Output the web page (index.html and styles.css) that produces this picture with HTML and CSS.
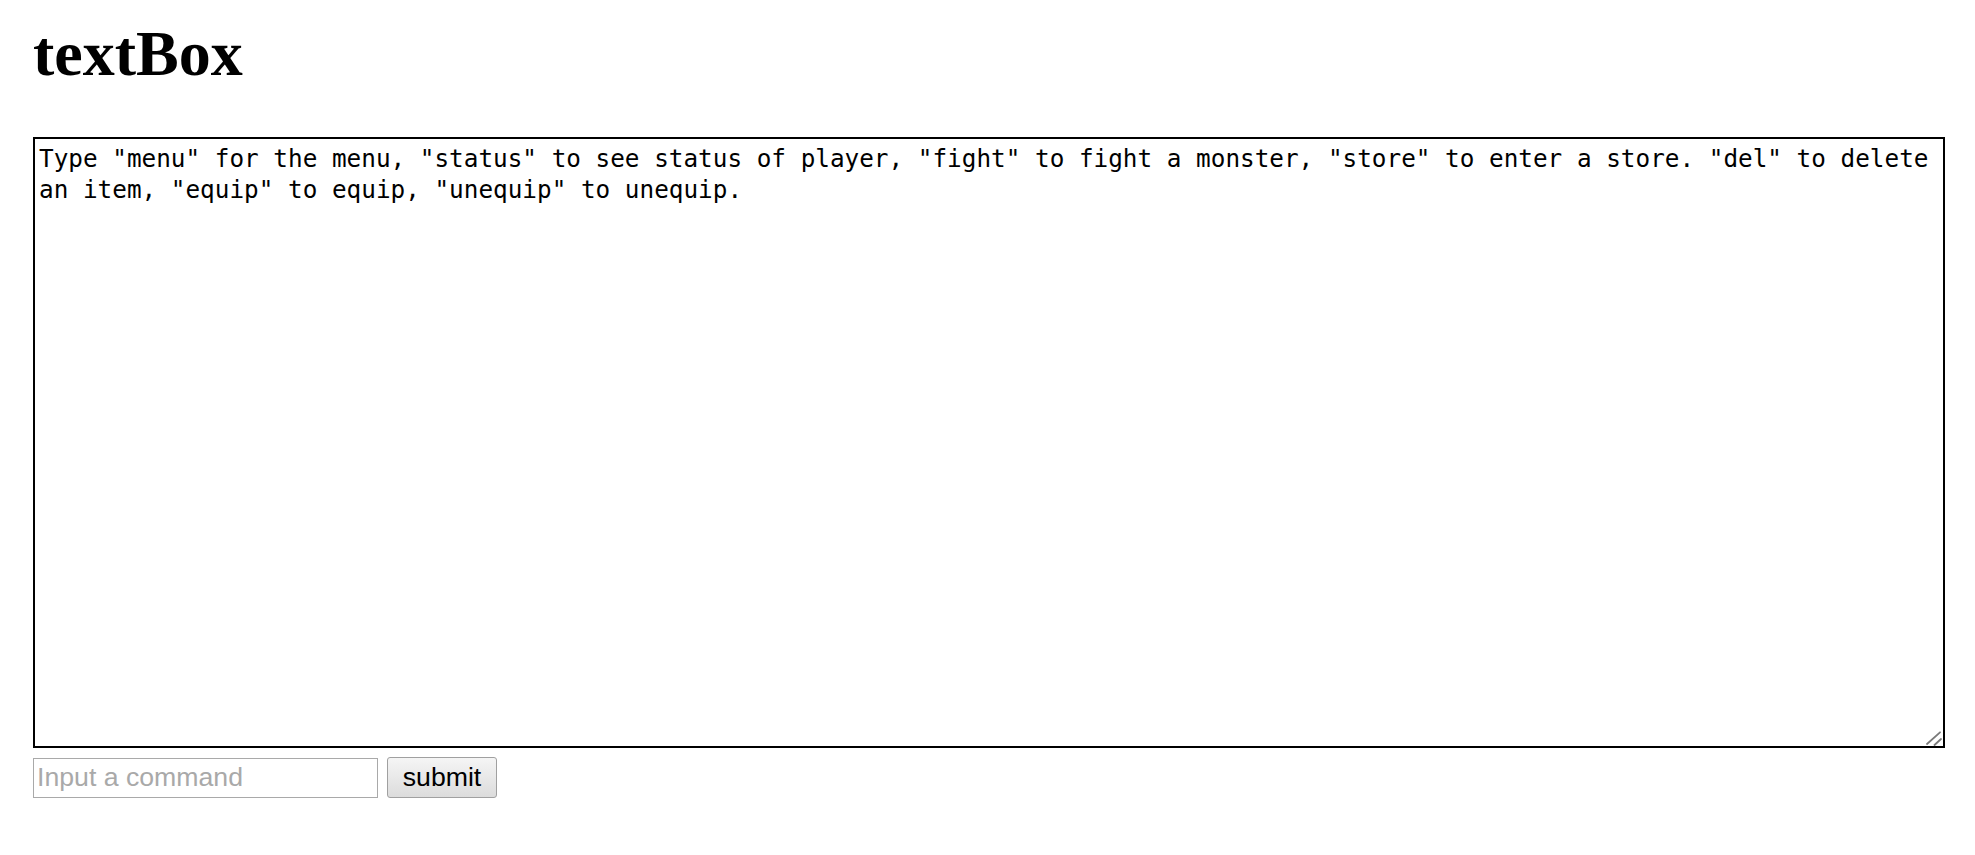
FILE: index.html
```html
<!DOCTYPE html>
<html>
<head>
<meta charset="utf-8">
<title>textBox</title>
<link rel="stylesheet" href="styles.css">
</head>
<body>
<h1 class="title">textBox</h1>
<div class="log-wrap">
  <textarea class="log">Type "menu" for the menu, "status" to see status of player, "fight" to fight a monster, "store" to enter a store. "del" to delete an item, "equip" to equip, "unequip" to unequip.</textarea>
  <svg class="grip" width="16" height="16" viewBox="0 0 16 16" aria-hidden="true">
    <line x1="1" y1="14" x2="14" y2="2.3" stroke="#7a7a7a" stroke-width="1.8" stroke-linecap="round"/>
    <line x1="8.5" y1="15" x2="15" y2="9" stroke="#7a7a7a" stroke-width="1.8" stroke-linecap="round"/>
  </svg>
</div>
<div class="controls">
  <input class="cmd" type="text" placeholder="Input a command">
  <button class="submit" type="button">submit</button>
</div>
</body>
</html>
```

FILE: styles.css
```css
html, body {
  background: #ffffff;
}

body {
  margin: 0;
  padding: 17px 30px 0 33px;
  font-family: "Liberation Serif", "Times New Roman", serif;
  color: #000;
}

.title {
  margin: 0 0 46px;
  font-family: "Liberation Serif", "Times New Roman", serif;
  font-weight: 700;
  font-size: 64px;
  line-height: 74px;
}

.log-wrap {
  position: relative;
  width: 1912px;
}

.log {
  display: block;
  box-sizing: border-box;
  width: 1912px;
  height: 611px;
  margin: 0;
  padding: 4px;
  border: 2px solid #000;
  border-radius: 0;
  font-family: "DejaVu Sans Mono", "Liberation Mono", monospace;
  font-size: 24.33px;
  line-height: 31.2px;
  color: #000;
  background: #fff;
  resize: none;
  outline: none;
}

.grip {
  position: absolute;
  right: 3px;
  bottom: 2px;
  pointer-events: none;
}

.controls {
  display: flex;
  align-items: center;
  gap: 9px;
  margin-top: 9px;
}

.cmd {
  box-sizing: border-box;
  width: 345px;
  height: 40px;
  margin: 0;
  padding: 3px 3px;
  border: 1px solid #a9a9a9;
  border-radius: 0;
  font-family: "Liberation Sans", Arial, sans-serif;
  font-size: 26.67px;
  color: #000;
  background: #fff;
  outline: none;
}

.cmd::placeholder {
  color: #a9a9a9;
  opacity: 1;
}

.submit {
  box-sizing: border-box;
  width: 110px;
  height: 41px;
  margin: 0;
  padding: 0 10px;
  border: 1px solid #a0a0a0;
  border-radius: 3px;
  background: linear-gradient(#f5f5f5, #dcdcdc);
  font-family: "Liberation Sans", Arial, sans-serif;
  font-size: 26.67px;
  color: #000;
  line-height: 1;
}
```
